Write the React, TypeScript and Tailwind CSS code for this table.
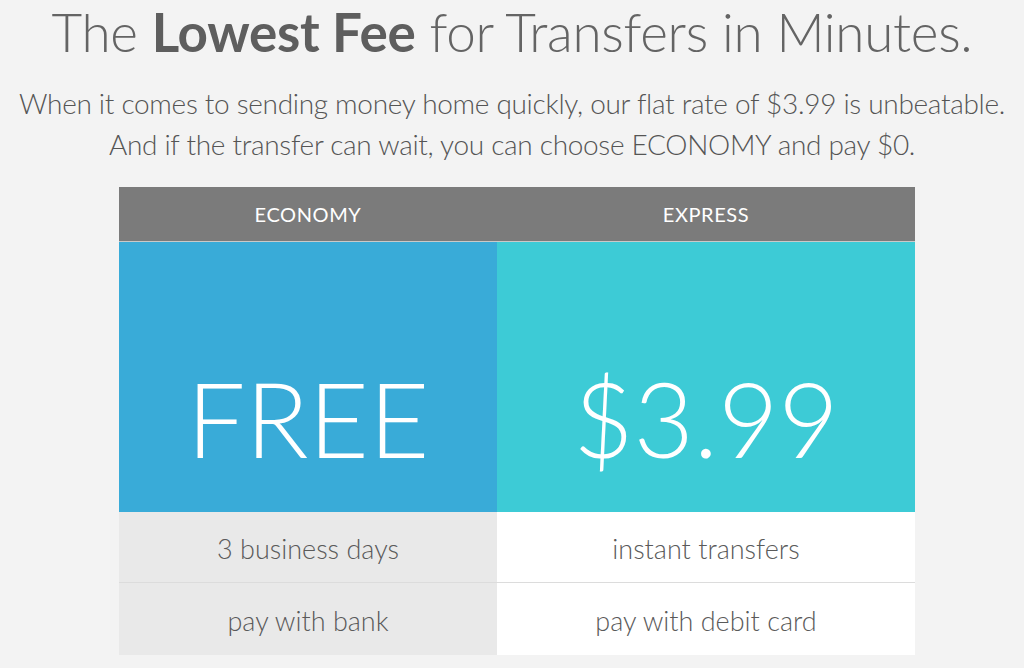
import React from 'react';

const rows = [
  { left: '3 business days', right: 'instant transfers' },
  { left: 'pay with bank', right: 'pay with debit card' },
];

const App = () => {
  return (
    <div className="w-[1024px] min-h-[668px] bg-[#f3f3f3] text-[#646464] font-['Lato',_'Open_Sans',_sans-serif]">
      {/* Heading */}
      <h1 className="text-center text-[53px] leading-[64px] font-light tracking-[-0.3px] whitespace-nowrap">
        The <span className="font-bold text-[#5e5e5e]">Lowest Fee</span> for Transfers in Minutes.
      </h1>
      <p className="mt-[19px] text-center text-[28px] leading-[41px] font-light text-[#555] whitespace-nowrap tracking-[-0.3px]">
        When it comes to sending money home quickly, our flat rate of $3.99 is unbeatable.
        <br />
        And if the transfer can wait, you can choose ECONOMY and pay $0.
      </p>

      {/* Pricing table */}
      <div className="mt-[22px] ml-[119px] w-[796px] flex flex-col">
        <div className="flex h-[55px] bg-[#7b7b7b] text-white text-[20px] tracking-[0.6px] border-b border-[#c9c9c9]">
          <div className="w-[378px] flex items-center justify-center">ECONOMY</div>
          <div className="flex-1 flex items-center justify-center">EXPRESS</div>
        </div>
        <div className="flex h-[270px] text-white text-[104px] font-light">
          <div className="w-[378px] bg-[#39abd8] flex items-center justify-center pt-[82px] leading-none">FREE</div>
          <div className="flex-1 bg-[#3dcbd6] flex items-center justify-center pt-[82px] leading-none">$3.99</div>
        </div>
        {rows.map((r, i) => (
          <div
            key={i}
            className={`flex text-[27px] font-light text-[#5a5a5a] ${i === 0 ? 'h-[71px] border-b border-[#dcdcdc]' : 'h-[72px]'}`}
          >
            <div className="w-[378px] bg-[#e9e9e9] flex items-center justify-center pt-[4px]">{r.left}</div>
            <div className="flex-1 bg-white flex items-center justify-center pt-[4px]">{r.right}</div>
          </div>
        ))}
      </div>
    </div>
  );
};

export default App;
